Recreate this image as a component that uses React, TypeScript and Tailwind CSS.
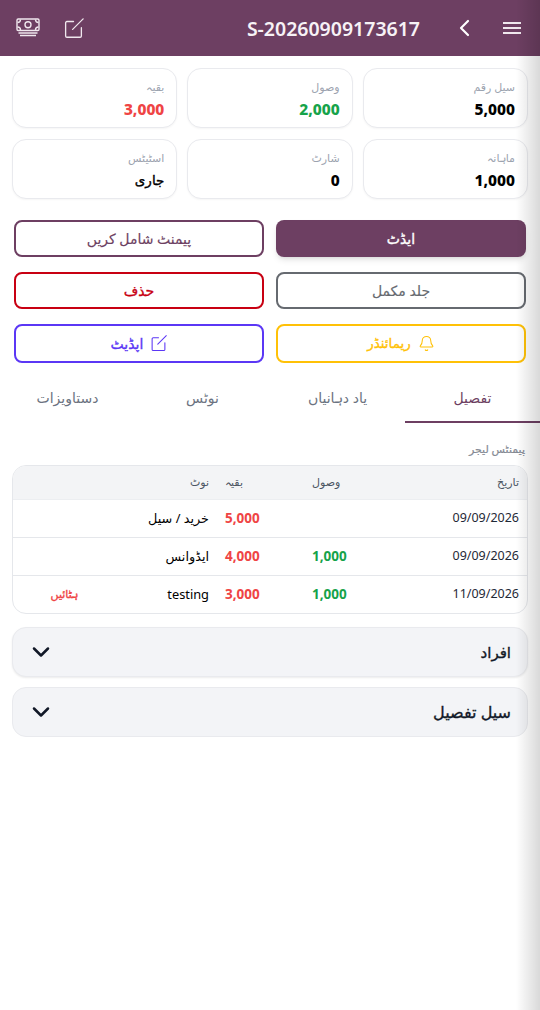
import React from 'react';
import { Bell } from 'lucide-react';

const FONT = { fontFamily: '"Noto Sans", "DejaVu Sans", sans-serif' };

// اردو بولڈ کے لیے ہلکا سٹروک
const URDU_BOLD = 'font-normal [-webkit-text-stroke:0.35px_currentColor]';

const stats = [
  { label: 'سیل رقم', value: '5,000', color: 'text-black' },
  { label: 'وصول', value: '2,000', color: 'text-[#16a34a]' },
  { label: 'بقیہ', value: '3,000', color: 'text-[#ef4444]' },
  { label: 'ماہانہ', value: '1,000', color: 'text-black' },
  { label: 'شارٹ', value: '0', color: 'text-black' },
  { label: 'اسٹیٹس', value: 'جاری', color: 'text-black' },
];

const ledger = [
  { date: '09/09/2026', received: '', balance: '5,000', note: 'خرید / سیل', action: '' },
  { date: '09/09/2026', received: '1,000', balance: '4,000', note: 'ایڈوانس', action: '' },
  { date: '11/09/2026', received: '1,000', balance: '3,000', note: 'testing', action: 'ہٹائیں' },
];

const tabs = ['تفصیل', 'یاد دہانیاں', 'نوٹس', 'دستاویزات'];

const rowCols = 'grid grid-cols-[137px_86px_87px_131px_1fr] items-center';

const PenSquare = ({ className }: { className: string }) => (
  <svg viewBox="0 0 24 24" fill="none" stroke="currentColor" strokeWidth="1.5" strokeLinecap="round" strokeLinejoin="round" className={className}>
    <path d="M12 4H4.500A1.500 1.500 0 0 0 3 5.500V20.500A1.500 1.500 0 0 0 4.500 22H19.500A1.500 1.500 0 0 0 21 20.500V11" />
    <path d="M11 13 23 1" />
  </svg>
);

const Money = () => (
  <svg viewBox="0 0 24 20" fill="none" stroke="currentColor" strokeWidth="1.4" className="w-[24px] h-[20px]">
    <rect x="1" y="1" width="22" height="11.500" rx="1.200" />
    <circle cx="12" cy="6.750" r="3" />
    <path d="M1.500 4.500C3.500 4.500 4.500 3.500 4.500 1.500M22.500 4.500C20.500 4.500 19.500 3.500 19.500 1.500M1.500 9C3.500 9 4.500 10 4.500 12M22.500 9C20.500 9 19.500 10 19.500 12" />
    <path d="M2.500 15H21.500M4 17.500H20" />
  </svg>
);

const Chevron = () => (
  <svg viewBox="0 0 18 12" fill="none" stroke="currentColor" strokeWidth="2.5" strokeLinecap="round" strokeLinejoin="round" className="w-[18px] h-[12px]">
    <path d="M2 2.500 9 9.500 16 2.500" />
  </svg>
);

export default function App() {
  return (
    <div dir="rtl" style={FONT} className="relative w-[540px] h-[1010px] overflow-hidden bg-white">
      {/* ہیڈر */}
      <header className="h-[56px] bg-[#6d3f62] flex items-center pr-[19px] pl-[16px] text-white">
        <button className="w-[18px] flex flex-col gap-[3px] items-center">
          <span className="block w-[18px] h-[2px] bg-[#f0e8ee]" />
          <span className="block w-[18px] h-[2px] bg-[#f0e8ee]" />
          <span className="block w-[18px] h-[2px] bg-[#f0e8ee]" />
        </button>
        <button className="mr-[33px] w-[12px]">
          <svg viewBox="0 0 12 18" fill="none" stroke="currentColor" strokeWidth="2.200" strokeLinecap="round" strokeLinejoin="round" className="w-[12px] h-[18px]">
            <path d="M10 2 3 9 10 16" />
          </svg>
        </button>
        <h1 dir="ltr" className="mr-[38px] mt-[1px] text-[19.500px] leading-[28px] font-semibold text-[#f7f2f6]">S-20260909173617</h1>
        <div className="mr-auto flex items-center gap-[23px] text-[#f0e8ee]">
          <PenSquare className="w-[21px] h-[21px]" />
          <Money />
        </div>
      </header>

      {/* خلاصہ کارڈز */}
      <section className="grid grid-cols-3 gap-x-[10px] gap-y-[11px] px-[12px] pt-[12px]">
        {stats.map((s) => (
          <div key={s.label} className="h-[60px] rounded-[14px] border border-[#e9eaee] bg-white shadow-[0_1px_2px_rgba(0,0,0,0.04)] px-[12px] pt-[10px] text-right">
            <div className="text-[11px] leading-[16px] text-[#9ca3af]">{s.label}</div>
            <div className={`mt-[2px] leading-[24px] ${s.value === 'جاری' ? `text-[13.500px] ${URDU_BOLD}` : 'text-[15.500px] font-extrabold'} ${s.color}`}>{s.value}</div>
          </div>
        ))}
      </section>

      {/* بٹن */}
      <section className="grid grid-cols-2 gap-x-[12px] px-[14px] pt-[21px]">
        <button className={`h-[37px] rounded-[8px] bg-[#6d3f62] text-white text-[14px] shadow-md ${URDU_BOLD}`}>ایڈٹ</button>
        <button className="h-[37px] rounded-[8px] border-2 border-[#6d3f62] text-[#6d3f62] text-[14px] [-webkit-text-stroke:0.15px_currentColor]">پیمنٹ شامل کریں</button>
        <button className="mt-[15px] h-[37px] rounded-[8px] border-2 border-[#666a70] text-[#666a70] text-[14px] [-webkit-text-stroke:0.15px_currentColor]">جلد مکمل</button>
        <button className={`mt-[15px] h-[37px] rounded-[8px] border-2 border-[#c80012] text-[#c80012] text-[14px] ${URDU_BOLD}`}>حذف</button>
        <button className={`mt-[15px] h-[39px] rounded-[8px] border-2 border-[#ffc107] text-[#ffc107] text-[13.500px] flex items-center justify-center gap-[7px] ${URDU_BOLD}`}>
          <Bell className="w-[17px] h-[17px]" strokeWidth={1.5} />
          <span>ریمائنڈر</span>
        </button>
        <button className={`mt-[15px] h-[39px] rounded-[8px] border-2 border-[#5b37f5] text-[#5b37f5] text-[14px] flex items-center justify-center gap-[7px] ${URDU_BOLD}`}>
          <PenSquare className="w-[17px] h-[17px]" />
          <span>اپڈیٹ</span>
        </button>
      </section>

      {/* ٹیبز */}
      <nav className="grid grid-cols-4 mt-[12px]">
        {tabs.map((t, i) => (
          <button
            key={t}
            className={`h-[48px] pb-[2px] text-[14px] border-b-2 ${i === 0 ? 'border-[#6d3f62] text-[#6d3f62]' : 'border-transparent text-[#6b7280]'}`}
          >
            {t}
          </button>
        ))}
      </nav>

      {/* لیجر */}
      <div className="px-[12px] pt-[17px]">
        <div className="pr-[3px] text-[11px] leading-[18px] text-[#858a94] [-webkit-text-stroke:0.2px_currentColor]">پیمنٹس لیجر</div>
        <div className="mt-[7px] rounded-[14px] border border-[#e5e7eb] overflow-hidden bg-white">
          <div className={`${rowCols} h-[34px] bg-[#f3f4f6] border-b border-[#eceef1] text-[11px] text-[#4b5563]`}>
            <div className="pr-[8px]">تاریخ</div>
            <div className="pl-[8px] text-left"><span dir="rtl">وصول</span></div>
            <div className="pl-[8px] text-left"><span dir="rtl">بقیہ</span></div>
            <div className="pr-[8px]">نوٹ</div>
            <div />
          </div>
          {ledger.map((r, i) => (
            <div key={i} className={`${rowCols} text-[12.500px] text-[#1f2937] ${i < 2 ? 'h-[38px] border-b border-[#e5e7eb]' : 'h-[37px]'}`}>
              <div className="pr-[8px]"><span dir="ltr">{r.date}</span></div>
              <div className="pl-[8px] text-left text-[13.500px] font-bold text-[#16a34a]">{r.received}</div>
              <div className="pl-[8px] text-left text-[13.500px] font-bold text-[#ef4444]">{r.balance}</div>
              <div className="pr-[8px] text-[12.800px] text-black">{r.note}</div>
              <div className={`pr-[8px] text-[11px] text-[#ef4444] ${URDU_BOLD}`}>{r.action}</div>
            </div>
          ))}
        </div>

        {/* اکارڈین */}
        <div className="mt-[13px] h-[50px] rounded-[14px] border border-[#e9eaee] bg-[#f3f4f7] shadow-[0_1px_2px_rgba(0,0,0,0.08)] flex items-center justify-between pr-[16px] pl-[19px]">
          <span className={`text-[15px] text-[#111827] ${URDU_BOLD}`}>افراد</span>
          <span className="text-[#111827]"><Chevron /></span>
        </div>
        <div className="mt-[10px] h-[50px] rounded-[14px] border border-[#e9eaee] bg-[#f3f4f7] flex items-center justify-between pr-[16px] pl-[19px]">
          <span className={`text-[16px] text-[#111827] ${URDU_BOLD}`}>سیل تفصیل</span>
          <span className="text-[#111827]"><Chevron /></span>
        </div>
      </div>

      {/* دائیں کنارے کا سایہ */}
      <div className="absolute inset-y-0 right-0 w-[24px] bg-gradient-to-l from-black/15 to-transparent pointer-events-none" />
    </div>
  );
}
